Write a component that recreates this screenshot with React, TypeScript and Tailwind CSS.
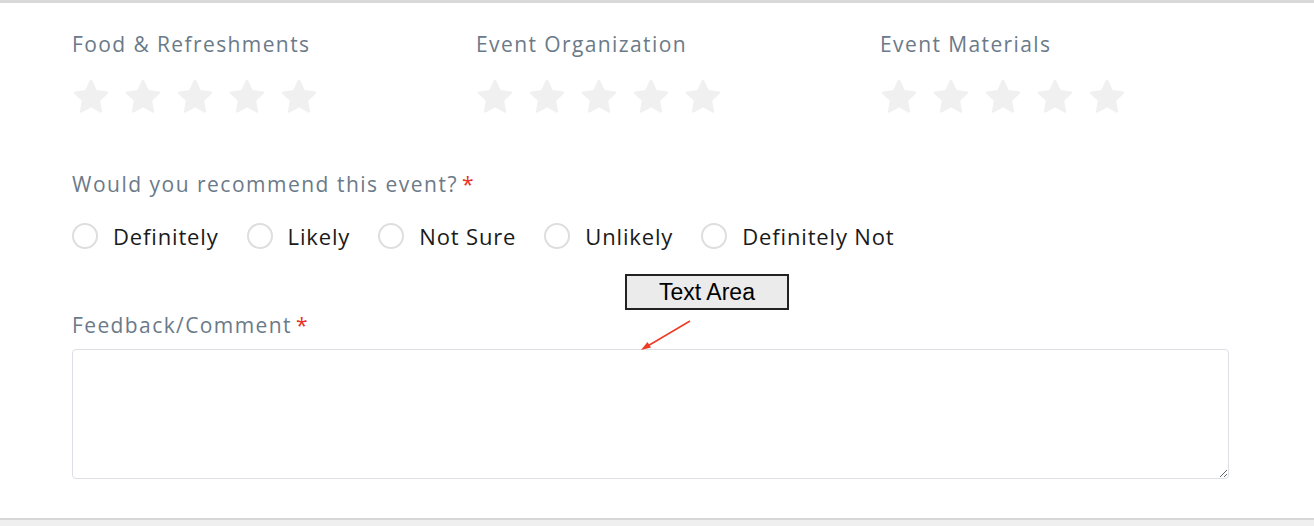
import { useState } from "react";

const ratingGroups = ["Food & Refreshments", "Event Organization", "Event Materials"];
const options = ["Definitely", "Likely", "Not Sure", "Unlikely", "Definitely Not"];

function Star() {
    return (
        <svg width="38" height="36" viewBox="0 0 24 23" className="shrink-0">
            <path
                d="M12 1.2l3.1 6.6 7.1.9-5.2 4.9 1.3 7.1L12 17.2l-6.3 3.5 1.3-7.1-5.2-4.9 7.1-.9z"
                fill="#f0f0f0"
                stroke="#f0f0f0"
                strokeWidth="1.6"
                strokeLinejoin="round"
            />
        </svg>
    );
}

export default function App() {
    const [choice, setChoice] = useState<string | null>(null);

    return (
        <div className="w-[1314px] h-[526px] bg-white flex flex-col" style={{ fontFamily: "'Open Sans', sans-serif" }}>
            <div className="h-[3px] bg-[#d9d9d9] shrink-0" />
            <div className="flex-1 pl-[72px] pr-[85px] pt-[27px]">
                {/* RATINGS */}
                <div className="flex">
                    {ratingGroups.map((title) => (
                        <div key={title} className="w-[404px] shrink-0">
                            <div className="text-[21px] leading-[28px] text-[#6b7a89] tracking-[1.4px]">{title}</div>
                            <div className="flex gap-[14px] mt-[21px]">
                                {[0, 1, 2, 3, 4].map((i) => (
                                    <Star key={i} />
                                ))}
                            </div>
                        </div>
                    ))}
                </div>

                {/* RECOMMEND */}
                <div className="mt-[55px] text-[21px] leading-[28px] text-[#6b7a89] tracking-[1.5px]">
                    Would you recommend this event?<span className="text-[#e8321f] ml-[4px]">*</span>
                </div>
                <div className="flex items-center mt-[24px]">
                    {options.map((opt) => (
                        <label key={opt} className="flex items-center mr-[28px] cursor-pointer" onClick={() => setChoice(opt)}>
                            <span
                                className={`w-[26px] h-[26px] rounded-full border-2 ${
                                    choice === opt ? "border-[#555]" : "border-[#dedede]"
                                }`}
                            />
                            <span className="ml-[15px] text-[22px] leading-[28px] text-[#1a1a1a] tracking-[0.85px]">{opt}</span>
                        </label>
                    ))}
                </div>

                {/* FEEDBACK */}
                <div className="relative mt-[61px] text-[21px] leading-[28px] text-[#6b7a89] tracking-[1.4px]">
                    Feedback/Comment<span className="text-[#e8321f] ml-[4px]">*</span>
                    <div
                        className="absolute left-[553px] top-[-37px] w-[164px] h-[36px] bg-[#ebebeb] border-2 border-[#222] flex items-center justify-center text-[23px] tracking-normal text-black"
                        style={{ fontFamily: "'Liberation Sans', Arial, sans-serif" }}
                    >
                        Text Area
                    </div>
                    <svg className="absolute left-[566px] top-[8px]" width="56" height="34" viewBox="0 0 56 34">
                        <line x1="52" y1="2" x2="8" y2="28" stroke="#ef3a25" strokeWidth="1.5" />
                        <path d="M3 31l10-2.5-3.5-5.5z" fill="#ef3a25" />
                    </svg>
                </div>
                <textarea className="block mt-[10px] w-[1157px] h-[130px] border border-[#dcdfe4] rounded-[4px] outline-none" />
            </div>
            <div className="h-[8px] bg-[#efefef] border-t-2 border-[#d6d6d6] shrink-0" />
        </div>
    );
}
